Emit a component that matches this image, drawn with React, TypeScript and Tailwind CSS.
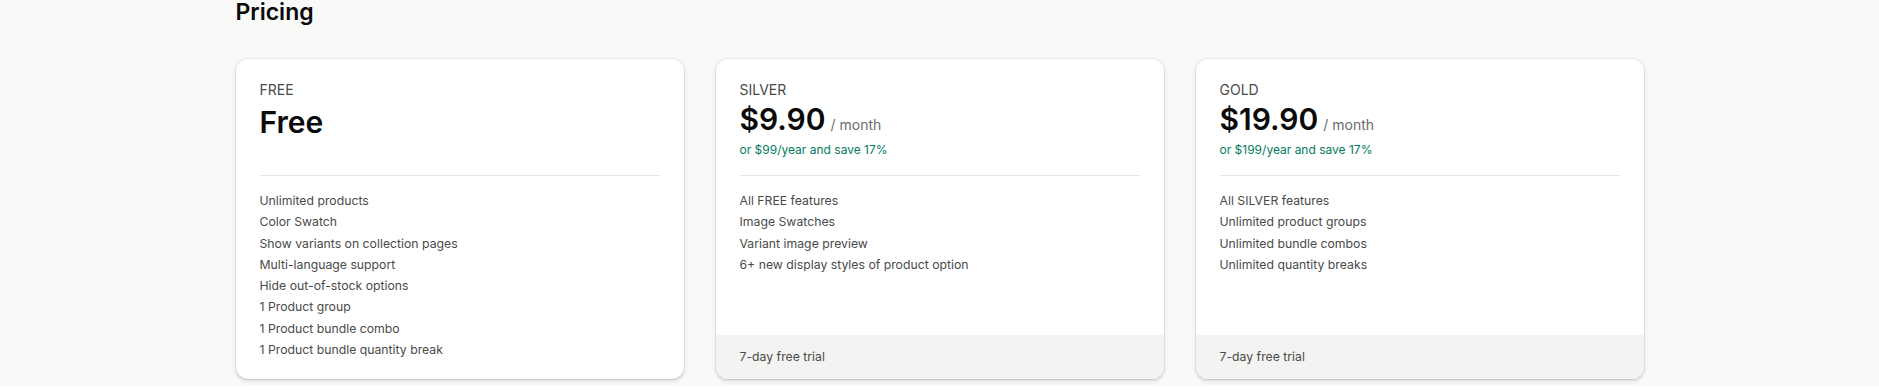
import React from "react";

type Plan = {
  label: string;
  price: string;
  per?: string;
  yearly?: string;
  features: string[];
  footer?: string;
};

const plans: Plan[] = [
  {
    label: "FREE",
    price: "Free",
    features: [
      "Unlimited products",
      "Color Swatch",
      "Show variants on collection pages",
      "Multi-language support",
      "Hide out-of-stock options",
      "1 Product group",
      "1 Product bundle combo",
      "1 Product bundle quantity break",
    ],
  },
  {
    label: "SILVER",
    price: "$9.90",
    per: "/ month",
    yearly: "or $99/year and save 17%",
    features: [
      "All FREE features",
      "Image Swatches",
      "Variant image preview",
      "6+ new display styles of product option",
    ],
    footer: "7-day free trial",
  },
  {
    label: "GOLD",
    price: "$19.90",
    per: "/ month",
    yearly: "or $199/year and save 17%",
    features: [
      "All SILVER features",
      "Unlimited product groups",
      "Unlimited bundle combos",
      "Unlimited quantity breaks",
    ],
    footer: "7-day free trial",
  },
];

function Card({ plan }: { plan: Plan }) {
  return (
    <div className="flex flex-col overflow-hidden rounded-xl bg-white shadow-[0_0_0_1px_rgba(0,0,0,0.04),0_1px_2px_rgba(0,0,0,0.12),0_2px_5px_rgba(0,0,0,0.1)]">
      <div className="flex-1 px-6 pt-[21px] pb-[19px]">
        <div className="h-[80px]">
          <div className="text-[14px] leading-[20px] text-[#4a4a4a]">{plan.label}</div>
          {plan.per ? (
            <>
              <div className="mt-[1px] flex items-baseline">
                <span className="text-[30px] leading-[36px] font-semibold text-[#0a0a0a]">{plan.price}</span>
                <span className="ml-[5px] text-[14px] leading-[20px] text-[#6b6b6b]">{plan.per}</span>
              </div>
              <div className="mt-[3px] text-[12px] leading-[20px] text-[#047b5d]">{plan.yearly}</div>
            </>
          ) : (
            <div className="mt-[4px] text-[30px] leading-[36px] font-semibold text-[#0a0a0a]">{plan.price}</div>
          )}
        </div>
        <div className="mt-[15px] h-px bg-[#e3e3e3]" />
        <ul className="mt-[14px]">
          {plan.features.map((f) => (
            <li key={f} className="text-[12.25px] leading-[21.28px] text-[#4a4a4a]">
              {f}
            </li>
          ))}
        </ul>
      </div>
      {plan.footer && (
        <div className="bg-[#f3f3f2] px-6 py-3 text-[12.25px] leading-[20px] text-[#4a4a4a]">{plan.footer}</div>
      )}
    </div>
  );
}

export default function App() {
  return (
    <div
      className="min-h-[390px] w-full bg-[#f9f9f8]"
      style={{ fontFamily: "Inter, 'Noto Sans', sans-serif" }}
    >
      <div className="mx-auto w-[1408px]">
        <h1 className="-mt-[4px] text-[23px] leading-[32px] font-semibold text-[#0a0a0a]">Pricing</h1>
        <div className="mt-[31px] grid grid-cols-3 gap-8">
          {plans.map((p) => (
            <Card key={p.label} plan={p} />
          ))}
        </div>
      </div>
    </div>
  );
}
